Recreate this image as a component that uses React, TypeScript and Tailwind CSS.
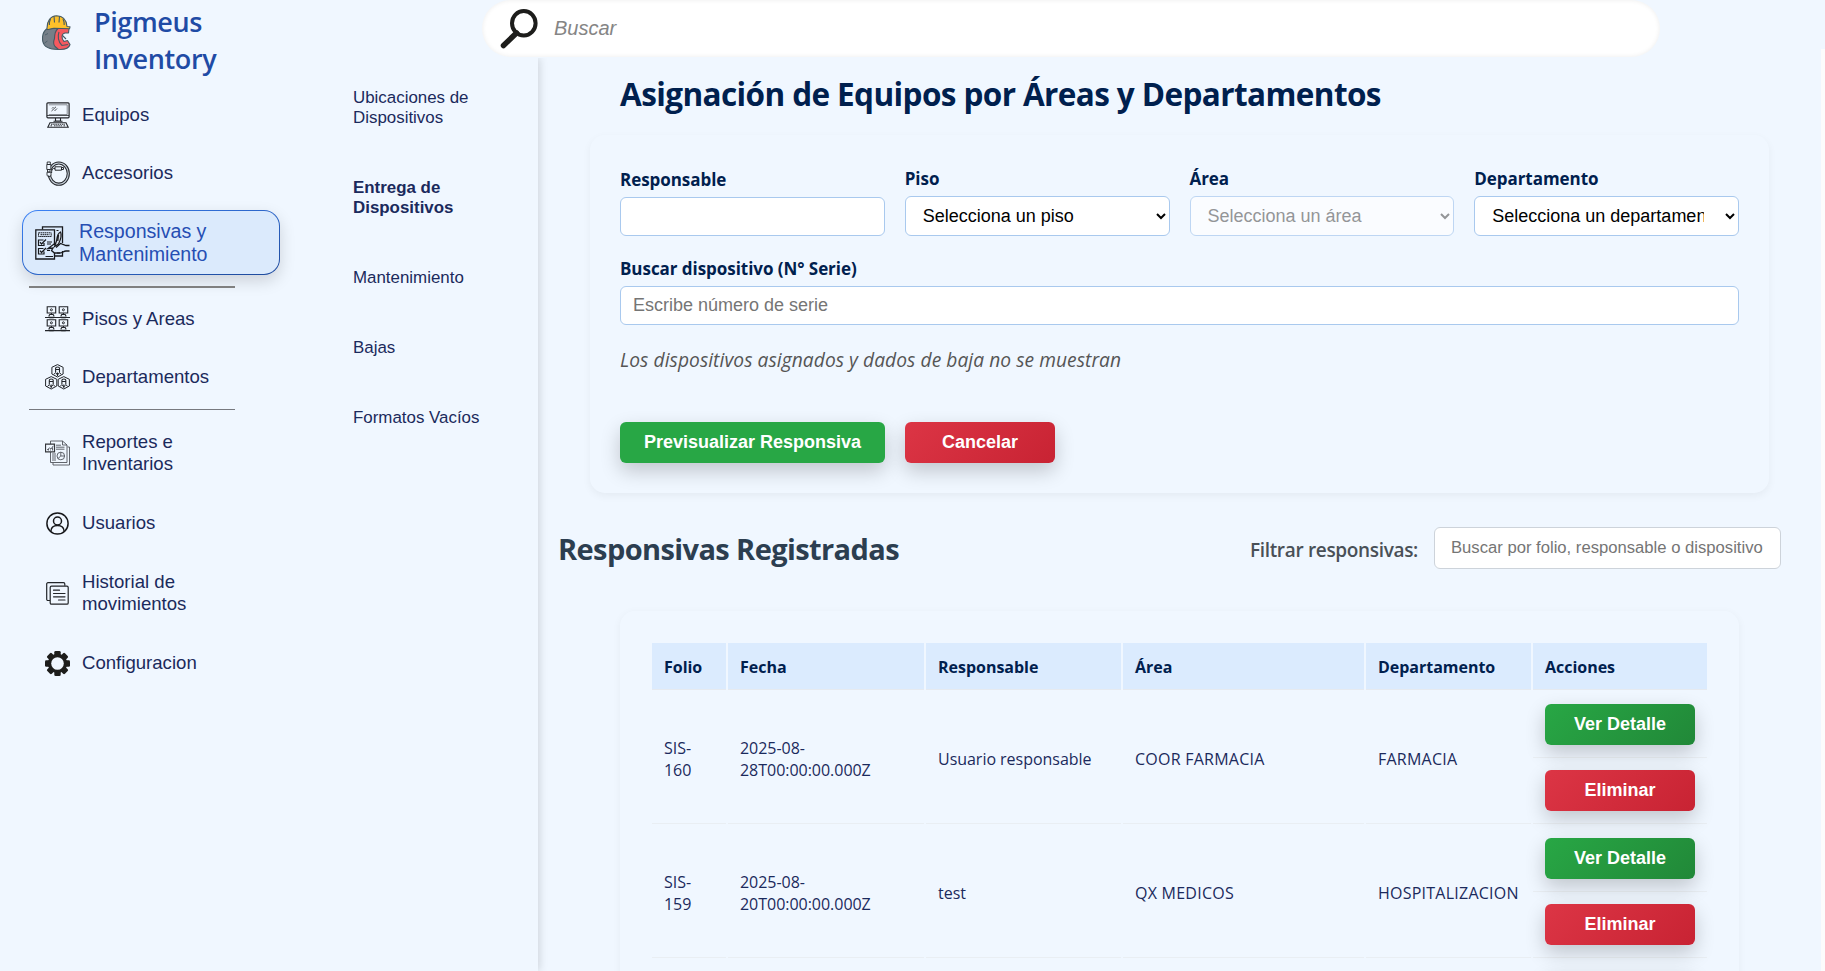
import type { ReactNode } from "react";

const UI = "font-['Open_Sans','Noto_Sans',sans-serif]";
const ARIAL = "font-['Liberation_Sans',Arial,sans-serif]";

function Logo() {
  return (
    <svg width="29" height="36" viewBox="0 0 29 36" fill="none" stroke="#455a64" strokeWidth="1.1" strokeLinejoin="round">
      <path d="M4.5 14C1 17 0 22 .8 26.500C2 32 8 34.500 16 34.500L19 13Z" fill="#767f88" />
      <path d="M16 13.500H27L26.500 18H23C19.500 18.500 19 23.500 22 26.500L25.500 25.500L28 29.500C27 33.500 22 34.800 16.500 34.500L13 31.500C11 29 11.500 26 12.500 23.500C12.500 19 13 16 16 13.500Z" fill="#f6595f" />
      <path d="M17 17C15.500 21 16 27 20 30.500L26 29.500M20.500 20.500L24 24" />
      <path d="M3 20L6 18.500M2.500 28L5.500 26" strokeWidth=".8" />
      <path d="M5 13C5 6 8.500 1 14.500.8C21 1 24.500 5.500 25 11.500L28 11.800L27.500 13.800L12 13.300C9 13.600 7 14.500 5 14.500Z" fill="#fdc12a" />
      <path d="M12 1L12.500 7.500M17.500 1.200L17 7.500M8.500 4C7.500 6 7.200 8 7.400 10M21 4C22 6 22.300 8 22.200 10" />
    </svg>
  );
}

function ComputerIcon() {
  return (
    <svg width="24" height="26" viewBox="0 0 24 26" fill="none" stroke="#22252a">
      <rect x=".9" y=".8" width="22.200" height="15" rx="1" strokeWidth="1.200" />
      <path d="M2.800 2.800H21.200V12.500H2.800" strokeWidth=".5" />
      <path d="M1 13.500H23" strokeWidth=".8" />
      <path d="M5.500 9L10 4.800M6 6.500L7.500 5M8.500 9L11 6.500" strokeWidth=".8" />
      <path d="M9.500 16V19H14.500V16M7.500 19.200H16.500" strokeWidth="1.100" />
      <path d="M4 20.800H20L22.200 25.200H1.800Z" strokeWidth="1.100" />
      <path d="M5 22.300H19M4.500 23.800H6.500M8 23.800H16M17.500 23.800H19.500" strokeWidth=".9" strokeDasharray="1.500 .7" />
    </svg>
  );
}

function CableIcon() {
  return (
    <svg width="24" height="25" viewBox="0 0 24 25" fill="none" stroke="#26292e">
      <ellipse cx="12.800" cy="12.600" rx="9.500" ry="10.600" strokeWidth="3.200" />
      <ellipse cx="12.800" cy="12.600" rx="9.500" ry="10.600" strokeWidth="1.100" stroke="#c9d2dc" />
      <rect x=".2" y="0" width="4.800" height="14.500" fill="#f0f7ff" stroke="none" />
      <path d="M1.200 1H4.300V3.500H1.200ZM.8 3.500H4.800V8.500H.8ZM1.500 8.500H4V11H1.500ZM1 11.200H5V14.500L3 16L1 14.500Z" strokeWidth=".9" />
      <path d="M9 5.800H15.500V9.200H9ZM15.500 6.500H17.500V8.500H15.500ZM9 7.500H7.500C6 8 5.500 10 5.600 12" strokeWidth="1" />
    </svg>
  );
}

function ChecklistIcon() {
  return (
    <svg width="35" height="34" viewBox="0 0 35 34" fill="none" stroke="#17191d" strokeWidth="1.300">
      <path d="M7.500 3.500V.8H27.500V17M27.500 25V30H19.500" />
      <path d="M19.500 19V3.800H.8V33H19.500V27" />
      <path d="M3.500 6.800H16.200V10.500H3.500ZM5.500 8.700H14.500" strokeWidth="1" strokeDasharray="1.500 .5" />
      <path d="M8.500 14H3.500V19.500H9V17M5 16.200L6.500 18L11 13.500M8.500 22.500H3.500V28H9V25.500M5 24.700L6.500 26.500L11 22" strokeWidth="1.200" />
      <path d="M12 16H17M12 18H16M12 24.500H15M10.500 30.500H18M22 27H25M21.500 4.500H23.500" strokeWidth="1" />
      <path d="M25.500 6C23 7 22 10 21.500 15L19.500 20.500L23.500 18C25.500 14 27 9 25.500 6ZM23.500 9L22.800 15" fill="#d9dfe8" strokeWidth="1.200" />
      <path d="M20.500 17L13 22.500L18 22L16.500 24.500L19.500 27H25C27.500 27 28.500 25 31 25H34.500M34.500 19.500H31L25.500 17.500L21 21.500" strokeWidth="1.300" />
    </svg>
  );
}

function Station({ x, y }: { x: number; y: number }) {
  return (
    <g transform={`translate(${x} ${y})`}>
      <path d="M1 .7H9.500V7H1ZM5.200 7V8.500M2.500 10.500L3.500 8.500H7L8 10.500" strokeWidth="1.100" />
      <circle cx="5.200" cy="3.800" r="1" strokeWidth="1" />
      <path d="M3 11.500H7.500" strokeWidth="1.500" />
    </g>
  );
}

function FloorsIcon() {
  return (
    <svg width="25" height="26" viewBox="0 0 25 26" fill="none" stroke="#22252a">
      <Station x={1.2} y={0} />
      <Station x={13.2} y={0} />
      <Station x={1.2} y={13} />
      <Station x={13.2} y={13} />
      <path d="M0 11.500H25M0 24.700H25" strokeWidth="1.200" />
    </svg>
  );
}

function HexPerson({ x, y }: { x: number; y: number }) {
  return (
    <g transform={`translate(${x} ${y})`}>
      <path d="M6.200 .6L11.800 3.300V10L6.200 13L.6 10V3.300Z" strokeWidth="1" />
      <path d="M4.300 8V4.200C4.300 2.600 8.200 2.600 8.200 4.200V8M4.300 5.500H8.200" strokeWidth="1.100" />
      <path d="M2.500 10.500L4.300 8.500L6.200 11L8.200 8.500L10 10.500M6.200 8.500V12" strokeWidth="1" />
    </g>
  );
}

function DepartmentsIcon() {
  return (
    <svg width="25" height="26" viewBox="0 0 25 26" fill="none" stroke="#22252a">
      <HexPerson x={6.3} y={0} />
      <HexPerson x={0} y={12} />
      <HexPerson x={12.6} y={12} />
    </svg>
  );
}

function ReportIcon() {
  return (
    <svg width="25" height="26" viewBox="0 0 25 26" fill="none" stroke="#50545b" strokeWidth=".9">
      <path d="M5.500 4V1H17.500L22 5V22.500H5.500V12" />
      <path d="M17.500 1V5H22M22.500 7H24.500V25H8V22.800" />
      <path d="M.5 4.200H9.500V11.800H.5Z" strokeWidth="1.200" stroke="#33363b" />
      <path d="M2 10L4.500 8L6 9L8.300 5.800M3.500 10.500V9M5.500 10.500V9.500M7.500 10.500V7.500" />
      <path d="M11 5.200H16M11 7.200H19.500M11 9.200H19.500M7 14H11M7 16H11M7 18H11M7 20H11" />
      <circle cx="15.800" cy="16" r="3.800" />
      <path d="M15.800 12.200V16L13 18.500M15.800 16H19.500" />
    </svg>
  );
}

function UserIcon() {
  return (
    <svg width="23" height="23" viewBox="0 0 23 23" fill="none" stroke="#17181b" strokeWidth="1.500">
      <circle cx="11.500" cy="11.500" r="10.600" />
      <circle cx="11.500" cy="9" r="4" />
      <path d="M4.800 19.500C5 15.800 7.500 13.600 11.500 13.600C15.500 13.600 18 15.800 18.200 19.500" />
    </svg>
  );
}

function HistoryIcon() {
  return (
    <svg width="23" height="23" viewBox="0 0 23 23" fill="none" stroke="#222529" strokeWidth="1.200">
      <path d="M4 18.500H2C1.200 18.500.7 18 .7 17.200V2C.7 1.200 1.200.7 2 .7H17.500C18.300.7 18.800 1.200 18.800 2V3.800" />
      <rect x="4.200" y="4.200" width="18" height="18" rx="1.300" />
      <path d="M7.500 8.200H13.500M7.500 11.500H19M7.500 14.800H19M12.500 18H19" strokeLinecap="round" />
    </svg>
  );
}

function GearIcon() {
  return (
    <svg width="25" height="25" viewBox="-12.500 -12.500 25 25" fill="#1d1d1b">
      {[0, 45, 90, 135].map((a) => (
        <rect key={a} x="-3.200" y="-12.500" width="6.400" height="25" rx="1.300" transform={`rotate(${a})`} />
      ))}
      <circle r="9.700" />
      <circle r="6.300" fill="#f0f7ff" />
    </svg>
  );
}

function SearchIcon() {
  return (
    <svg width="38" height="40" viewBox="0 0 38 40" fill="none" stroke="#1d1d1b">
      <ellipse cx="23.800" cy="14.300" rx="11.800" ry="12.200" strokeWidth="4" />
      <path d="M16.500 24L3.500 36.500" strokeWidth="5.500" strokeLinecap="round" />
    </svg>
  );
}

function NavItem({ icon, lines }: { icon: ReactNode; lines: string[] }) {
  return (
    <a className={`flex items-center pl-[45px] ${lines.length > 1 ? "h-[82px]" : "h-[58px]"}`}>
      <span className="flex w-[25px] justify-center">{icon}</span>
      <span className={`${ARIAL} ml-[12px] pb-px text-[18.600px] leading-[22px] text-[#1b2a5c]`}>
        {lines.map((l) => (
          <span key={l} className="block">{l}</span>
        ))}
      </span>
    </a>
  );
}

function Sidebar() {
  return (
    <aside className="w-[300px] shrink-0">
      <div className="flex h-[86px]">
        <div className="ml-[42px] mt-[15px] w-[52px]">
          <Logo />
        </div>
        <div className={`${UI} mt-[3px] text-[27px] font-semibold leading-[37px] tracking-[-0.400px] text-[#1f4ba5]`}>
          Pigmeus
          <br />
          Inventory
        </div>
      </div>
      <nav className="flex flex-col">
        <NavItem icon={<ComputerIcon />} lines={["Equipos"]} />
        <NavItem icon={<CableIcon />} lines={["Accesorios"]} />
        <div className="flex h-[81px] items-center pl-[22px]">
          <div className="h-[65px] w-[258px] rounded-[16px] bg-linear-to-br from-[#3b82f6] to-[#1e4a9c] p-px shadow-[0_6px_16px_rgba(0,0,0,0.150)]">
            <div className="flex h-full items-center rounded-[15px] bg-[#dbeafc] pl-[12px]">
              <ChecklistIcon />
              <span className={`${ARIAL} ml-[9px] text-[19.600px] leading-[23px] text-[#264eb3]`}>
                Responsivas y
                <br />
                Mantenimiento
              </span>
            </div>
          </div>
        </div>
        <hr className="mb-[2px] ml-[29px] mt-[3px] h-[2px] w-[206px] border-0 bg-[#808080]" />
        <NavItem icon={<FloorsIcon />} lines={["Pisos y Areas"]} />
        <NavItem icon={<DepartmentsIcon />} lines={["Departamentos"]} />
        <hr className="mb-[2px] ml-[29px] mt-[3px] h-px w-[206px] border-0 bg-[#77797f]" />
        <NavItem icon={<ReportIcon />} lines={["Reportes e", "Inventarios"]} />
        <NavItem icon={<UserIcon />} lines={["Usuarios"]} />
        <NavItem icon={<HistoryIcon />} lines={["Historial de", "movimientos"]} />
        <NavItem icon={<GearIcon />} lines={["Configuracion"]} />
      </nav>
    </aside>
  );
}

function SubMenu() {
  return (
    <nav className={`${ARIAL} flex w-[238px] shrink-0 flex-col gap-[50px] pl-[53px] pt-[30px] text-[16.900px] leading-[20px] text-[#1b2a5c] shadow-[2px_0_8px_rgba(0,0,0,0.130)] [clip-path:inset(0_-12px_0_0)]`}>
      <a>Ubicaciones de<br />Dispositivos</a>
      <a className="font-bold">Entrega de<br />Dispositivos</a>
      <a>Mantenimiento</a>
      <a>Bajas</a>
      <a>Formatos Vacíos</a>
    </nav>
  );
}

const FIELD = "w-full rounded-[6px] border border-[#a9c9ee] bg-white text-[18px]";
const LABEL = "block text-[17px] font-bold leading-[24px] tracking-[-0.050px] text-[#00204e]";

function SelectField({ label, value, disabled }: { label: string; value: string; disabled?: boolean }) {
  return (
    <div>
      <label className={LABEL}>{label}</label>
      <select disabled={disabled} className={`${FIELD} ${ARIAL} mt-[5px] h-[40px] pl-[13px] pr-[18px] text-black disabled:text-[#6d6d6d] disabled:opacity-70`}>
        <option>{value}</option>
      </select>
    </div>
  );
}

const BTN = `${ARIAL} h-[41px] rounded-[6px] text-[18px] font-bold text-white shadow-[0_8px_20px_rgba(0,0,0,0.200)]`;
const GREEN = "bg-linear-[135deg,#28a745,#218838]";
const RED = "bg-linear-[135deg,#dc3545,#c82333]";

function AssignmentForm() {
  return (
    <section className="ml-[52px] mt-[28px] h-[358px] w-[1179px] rounded-[15px] px-[30px] pt-[32px] shadow-[0_3px_8px_rgba(0,0,0,0.050)]">
      <div className="grid grid-cols-4 gap-[20px]">
        <div className="pt-px">
          <label className={LABEL}>Responsable</label>
          <input className={`${FIELD} ${ARIAL} mt-[5px] block h-[39px] px-[12px]`} />
        </div>
        <SelectField label="Piso" value="Selecciona un piso" />
        <SelectField label="Área" value="Selecciona un área" disabled />
        <SelectField label="Departamento" value="Selecciona un departamento" />
      </div>
      <label className={`${LABEL} mt-[21px]`}>Buscar dispositivo (N° Serie)</label>
      <input placeholder="Escribe número de serie" className={`${FIELD} ${ARIAL} mt-[5px] block h-[39px] px-[12px] placeholder:text-[#757575]`} />
      <p className="mt-[22px] text-[19.200px] italic leading-[26px] tracking-[0.060px] text-[#555]">Los dispositivos asignados y dados de baja no se muestran</p>
      <div className="mt-[49px] flex gap-[20px]">
        <button className={`${BTN} w-[265px] bg-[#28a745]`}>Previsualizar Responsiva</button>
        <button className={`${BTN} ${RED} w-[150px]`}>Cancelar</button>
      </div>
    </section>
  );
}

const HEADERS = ["Folio", "Fecha", "Responsable", "Área", "Departamento", "Acciones"];
const ROWS = [
  { folio: "160", day: "28", who: "Usuario responsable", area: "COOR FARMACIA", dept: "FARMACIA" },
  { folio: "159", day: "20", who: "test", area: "QX MEDICOS", dept: "HOSPITALIZACION" },
];
const COLS = "grid grid-cols-[74px_196px_195px_241px_165px_174px] gap-x-[2px]";
const CELL = "flex items-center border-b border-[#e9eef3] px-[12px] pt-[4px] whitespace-nowrap";

function RecordsTable() {
  return (
    <section className="ml-[82px] h-[500px] w-[1119px] rounded-[15px] px-[32px] pt-[32px] shadow-[0_2px_8px_rgba(0,0,0,0.050)]">
      <div className={COLS}>
        {HEADERS.map((h) => (
          <div key={h} className="flex h-[47px] items-center border-b border-[#e6eaf0] bg-[#dbebfe] px-[12px] pt-[2px] text-[16px] font-bold tracking-[-0.020px] text-[#00204e]">
            {h}
          </div>
        ))}
      </div>
      {ROWS.map((r) => (
        <div key={r.folio} className={`${COLS} h-[134px] text-[16px] leading-[22px] tracking-[-0.030px] text-[#1b2a5c]`}>
          <div className={CELL}>SIS-<br />{r.folio}</div>
          <div className={CELL}>2025-08-<br />{r.day}T00:00:00.000Z</div>
          <div className={CELL}>{r.who}</div>
          <div className={`${CELL} tracking-[0.240px]`}>{r.area}</div>
          <div className={`${CELL} tracking-[0.240px]`}>{r.dept}</div>
          <div className="pt-[2px]">
            <div className="h-[66px] border-b border-[#e9eef3] px-[12px] pt-[12px]">
              <button className={`${BTN} ${GREEN} w-[150px] pb-[2px] tracking-normal`}>Ver Detalle</button>
            </div>
            <div className="h-[66px] border-b border-[#e9eef3] px-[12px] pt-[12px]">
              <button className={`${BTN} ${RED} w-[150px] pb-[2px] tracking-normal`}>Eliminar</button>
            </div>
          </div>
        </div>
      ))}
      <div className={COLS}>
        <div className="col-start-6 px-[12px] pt-[14px]">
          <div className={`${BTN} ${GREEN} w-[150px]`} />
        </div>
      </div>
    </section>
  );
}

export default function App() {
  return (
    <div className="flex h-[971px] w-[1825px] overflow-hidden bg-[#f0f7ff]">
      <Sidebar />
      <div className="flex min-w-0 flex-1 flex-col">
        <header className="relative z-10 h-[58px] shrink-0 bg-[#f0f7ff] pl-[182px]">
          <div className="flex h-[57px] w-[1178px] items-center rounded-[29px] bg-white pl-[18px] shadow-[inset_0_0_5px_rgba(0,0,0,0.080)]">
            <SearchIcon />
            <input placeholder="Buscar" className={`${ARIAL} ml-[16px] w-[900px] bg-transparent pb-[2px] text-[20px] italic outline-none placeholder:text-[#858585]`} />
          </div>
        </header>
        <div className="flex min-h-0 flex-1">
          <SubMenu />
          <main className={`${UI} min-w-0 flex-1`}>
            <h1 className="ml-[82px] mt-[11px] h-[38px] whitespace-nowrap text-[31.500px] font-bold leading-[50px] tracking-[-0.600px] text-[#00204e]">
              Asignación de Equipos por Áreas y Departamentos
            </h1>
            <AssignmentForm />
            <div className="flex h-[118px] items-start pl-[20px] pr-[44px] pt-[34px]">
              <h2 className="text-[29px] font-bold leading-[44px] tracking-[-0.600px] text-[#2c3e50]">Responsivas Registradas</h2>
              <label className="ml-auto text-[19px] font-semibold leading-[46px] tracking-[-0.330px] text-[#495057]">Filtrar responsivas:</label>
              <input placeholder="Buscar por folio, responsable o dispositivo" className={`${ARIAL} ml-[16px] h-[42px] w-[347px] rounded-[6px] border border-[#cdd3da] bg-white pl-[16px] text-[16.650px] placeholder:text-[#757575]`} />
            </div>
            <RecordsTable />
          </main>
        </div>
      </div>
      <div className="absolute left-[1821px] top-[49px] z-20 h-[922px] w-[4px] bg-[#fcfcfc]" />
    </div>
  );
}
